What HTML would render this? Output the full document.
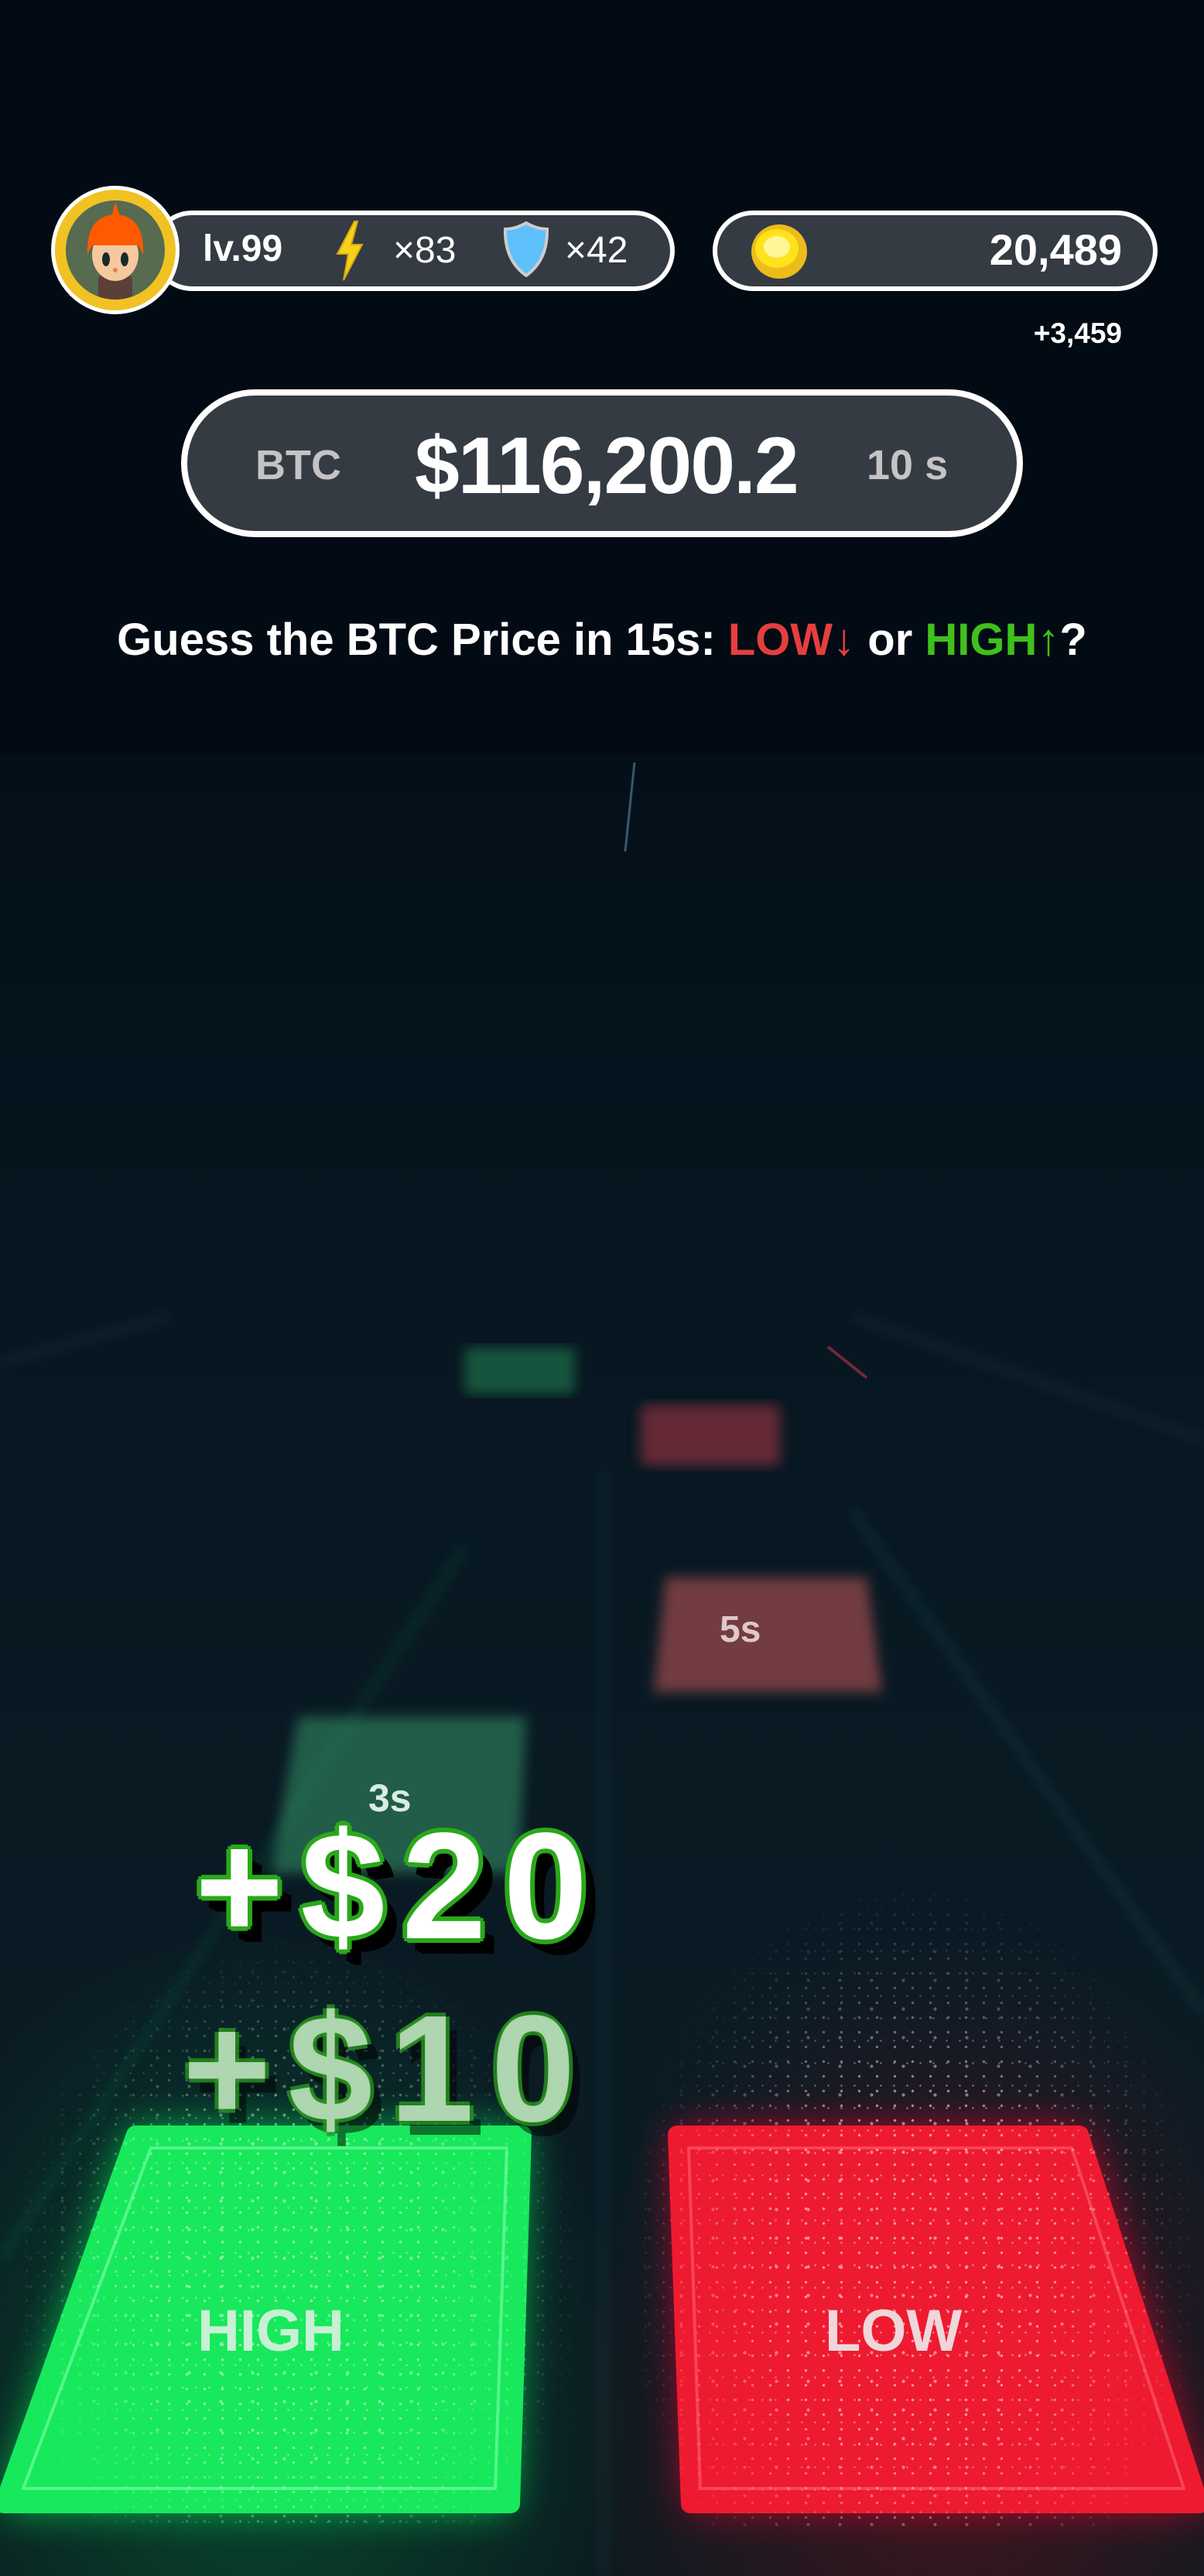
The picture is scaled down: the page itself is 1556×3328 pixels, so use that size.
<!DOCTYPE html>
<html><head><meta charset="utf-8">
<style>
*{margin:0;padding:0;box-sizing:border-box}
html,body{width:1556px;height:3328px;background:#020b14;overflow:hidden;font-family:"Liberation Sans",sans-serif;font-weight:bold;color:#fff}
.abs{position:absolute}
.pill{position:absolute;background:#353b43;border:6px solid #fff;border-radius:60px}
.game{position:absolute;left:0;top:976px;width:1556px;height:2352px;
background:
radial-gradient(ellipse 700px 900px at 330px 2150px,rgba(0,160,70,.35),transparent 70%),
radial-gradient(ellipse 700px 900px at 1230px 2150px,rgba(170,10,30,.35),transparent 70%),
linear-gradient(#03101a 0%,#081822 40%,#0a1b24 70%,#0b1a20 100%)}
.speck{position:absolute;
background-image:radial-gradient(circle,rgba(255,255,255,.9) 1.4px,transparent 2px),radial-gradient(circle,rgba(255,255,255,.7) 1px,transparent 1.6px),radial-gradient(circle,rgba(255,255,255,.8) 1.8px,transparent 2.4px);
background-size:23px 19px,17px 29px,41px 37px;background-position:0 0,7px 11px,19px 5px}
.t{position:absolute;text-align:center;white-space:nowrap}
.g20{text-shadow:
-6px 0 0 #2aa81a,6px 0 0 #2aa81a,0 -6px 0 #2aa81a,0 6px 0 #2aa81a,
-4px -4px 0 #2aa81a,4px -4px 0 #2aa81a,-4px 4px 0 #2aa81a,4px 4px 0 #2aa81a,
14px 18px 0 #000,18px 20px 0 #000,10px 16px 0 #000}
.g10{text-shadow:
-5px 0 0 rgba(40,150,30,.8),5px 0 0 rgba(40,150,30,.8),0 -5px 0 rgba(40,150,30,.8),0 5px 0 rgba(40,150,30,.8),
14px 18px 0 rgba(0,0,0,.5)}
</style></head><body>

<div class="pill" style="left:196px;top:272px;width:676px;height:104px;"></div>
<div class="abs" style="left:66px;top:240px;width:166px;height:166px;border-radius:50%;background:#f0c224;border:5px solid #fff"></div>
<div class="abs" style="left:85px;top:259px;width:128px;height:128px;border-radius:50%;background:#566b50;overflow:hidden">
 <svg width="128" height="128" viewBox="0 0 128 128">
  <rect x="42" y="95" width="44" height="40" rx="8" fill="#5a4039"/>
  <ellipse cx="64" cy="70" rx="30" ry="34" fill="#f6c89e"/>
  <path d="M28 70 Q26 20 64 18 Q102 20 100 70 L94 58 L34 58 Z" fill="#ff5a00"/>
  <path d="M60 18 L64 2 L70 20Z" fill="#ff5a00"/>
  <ellipse cx="52" cy="76" rx="5" ry="9" fill="#1a2a2a"/><ellipse cx="76" cy="76" rx="5" ry="9" fill="#1a2a2a"/>
  <circle cx="64" cy="90" r="3" fill="#e0805a"/>
 </svg>
</div>
<div class="t" style="left:262px;top:294px;font-size:48px">lv.99</div>
<svg class="abs" style="left:432px;top:284px" width="40" height="80" viewBox="0 0 40 80"><path d="M26 2 L4 44 L18 44 L12 78 L36 32 L22 32 L30 2Z" fill="#f6d21a" stroke="#d9a90c" stroke-width="2"/></svg>
<div class="t" style="left:508px;top:296px;font-size:48px;font-weight:normal">×83</div>
<svg class="abs" style="left:650px;top:286px" width="60" height="72" viewBox="0 0 60 72"><path d="M30 2 Q44 10 57 10 Q58 50 30 70 Q2 50 3 10 Q16 10 30 2Z" fill="#5ec0fb" stroke="#ccc" stroke-width="4"/></svg>
<div class="t" style="left:730px;top:296px;font-size:48px;font-weight:normal">×42</div>

<div class="pill" style="left:921px;top:272px;width:575px;height:104px;"></div>
<svg class="abs" style="left:968px;top:287px" width="78" height="76" viewBox="0 0 78 76"><ellipse cx="39" cy="38" rx="36" ry="35" fill="#edbc1c"/><ellipse cx="36" cy="34" rx="28" ry="25" fill="#ffe21a"/><ellipse cx="36" cy="32" rx="17" ry="14" fill="#fff69a"/></svg>
<div class="t" style="right:106px;top:290px;font-size:56px">20,489</div>
<div class="t" style="right:106px;top:410px;font-size:37px">+3,459</div>

<div class="pill" style="left:234px;top:503px;width:1088px;height:191px;border-width:8px;border-radius:96px"></div>
<div class="t" style="left:330px;top:570px;font-size:54px;color:#c4c4c4">BTC</div>
<div class="t" style="left:536px;top:543px;font-size:104px;letter-spacing:-2px">$116,200.2</div>
<div class="t" style="left:1120px;top:570px;font-size:54px;color:#c4c4c4">10 s</div>

<div class="t" style="left:0;width:1556px;top:793px;font-size:58px">Guess the BTC Price in 15s: <span style="color:#e63e3e">LOW↓</span> or <span style="color:#3fc11a">HIGH↑</span>?</div>

<div class="game">
<svg class="abs" style="left:0;top:0" width="1556" height="2352" viewBox="0 976 1556 2352">
 <defs>
  <filter id="b8"><feGaussianBlur stdDeviation="8"/></filter>
  <filter id="b20"><feGaussianBlur stdDeviation="26"/></filter>
 </defs>
 <g stroke-width="3" opacity=".5" filter="url(#b8)">
  <line x1="0" y1="2920" x2="600" y2="2000" stroke="#1fa36b"/>
  <line x1="1556" y1="2600" x2="1100" y2="1950" stroke="#2a8f7f"/>
  <line x1="0" y1="1760" x2="220" y2="1700" stroke="#3a6a7a"/>
  <line x1="1556" y1="1860" x2="1100" y2="1700" stroke="#3a6a7a"/>
  <line x1="780" y1="1900" x2="780" y2="3328" stroke="#2a6070"/>
 </g>
 <line x1="820" y1="985" x2="808" y2="1100" stroke="#5a8aa0" stroke-width="3" opacity=".6"/>
 <line x1="1070" y1="1740" x2="1120" y2="1780" stroke="#c0304a" stroke-width="4" opacity=".6"/>
 <rect x="600" y="1741" width="143" height="60" rx="6" fill="#2aa060" opacity=".45" filter="url(#b8)"/>
 <rect x="828" y="1815" width="180" height="78" rx="6" fill="#c03a4a" opacity=".5" filter="url(#b8)"/>
 <polygon points="860,2038 1120,2038 1140,2186 845,2186" fill="#c85a5a" opacity=".55" filter="url(#b8)"/>
 <polygon points="385,2218 680,2218 670,2420 350,2420" fill="#3aa070" opacity=".5" filter="url(#b8)"/>
 <polygon points="170,2752 680,2752 660,3241 0,3241" fill="#00ff60" opacity=".7" filter="url(#b20)"/>
 <polygon points="870,2752 1400,2752 1556,3241 890,3241" fill="#ff1030" opacity=".7" filter="url(#b20)"/>
 <polygon points="175,2758 675,2758 660,3235 5,3235" fill="#18e85c" stroke="#18e85c" stroke-width="24" stroke-linejoin="round"/>
 <polygon points="195,2775 655,2775 640,3215 30,3215" fill="none" stroke="#6dfda0" stroke-width="4" opacity=".7" stroke-linejoin="round"/>
 <polygon points="875,2758 1395,2758 1550,3235 892,3235" fill="#ee1a30" stroke="#ee1a30" stroke-width="24" stroke-linejoin="round"/>
 <polygon points="890,2775 1385,2775 1530,3215 905,3215" fill="none" stroke="#ff6070" stroke-width="4" opacity=".6" stroke-linejoin="round"/>
</svg>
</div>
<div class="speck" style="left:0;top:2450px;width:760px;height:820px;opacity:.55;-webkit-mask-image:radial-gradient(ellipse 420px 500px at 380px 500px,#000 40%,transparent 90%)"></div>
<div class="speck" style="left:800px;top:2350px;width:756px;height:920px;opacity:.6;-webkit-mask-image:radial-gradient(ellipse 420px 560px at 380px 580px,#000 40%,transparent 90%)"></div>

<div class="t" style="left:930px;top:2078px;font-size:48px;color:#e0c8c8">5s</div>
<div class="t" style="left:476px;top:2294px;font-size:50px;color:#d8ede0">3s</div>
<div class="t g20" style="left:252px;top:2324px;font-size:196px;letter-spacing:22px">+$20</div>
<div class="t g10" style="left:236px;top:2560px;font-size:196px;letter-spacing:22px;color:rgba(220,235,225,.75)">+$10</div>
<div class="t" style="left:255px;top:2968px;font-size:76px;color:#c9f0d4">HIGH</div>
<div class="t" style="left:1066px;top:2968px;font-size:76px;color:#f0d6da">LOW</div>
</body></html>
